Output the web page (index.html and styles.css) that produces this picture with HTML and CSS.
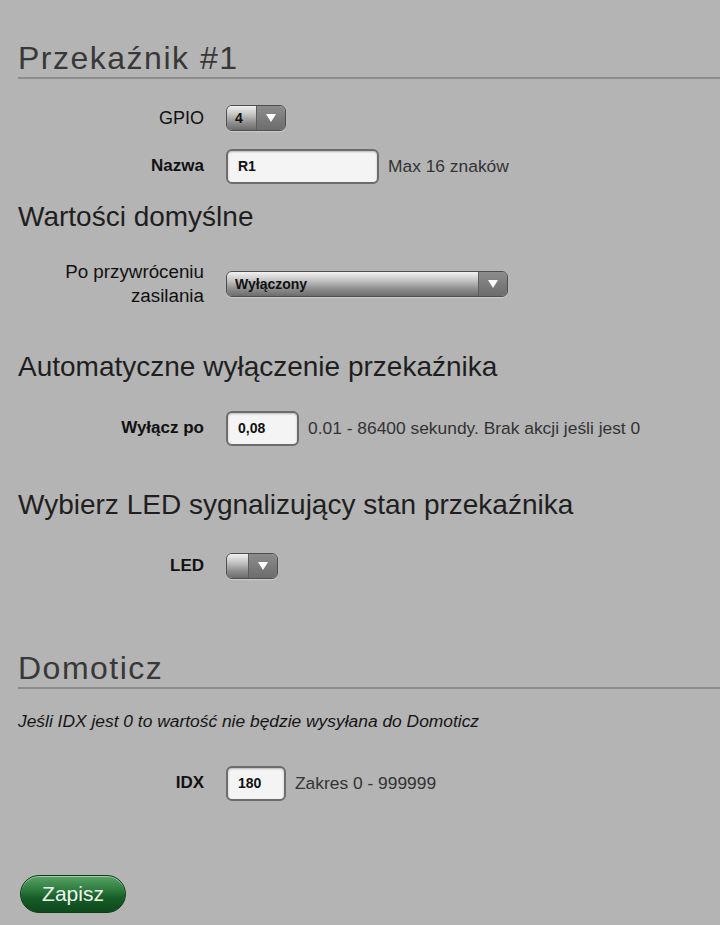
FILE: index.html
```html
<!DOCTYPE html>
<html lang="pl">
<head>
    <meta charset="UTF-8">
    <meta name="viewport" content="width=device-width, initial-scale=1.0">
    <title>Przekaźnik #1</title>
    <link rel="stylesheet" href="styles.css">
</head>
<body>

    <div class="page">
        <section class="relay">
            <h2 class="section-title">Przekaźnik #1</h2>

            <div class="field">
                <label class="field-label">GPIO</label>
                <div class="select select-gpio">
                    <span class="select-value">4</span>
                    <span class="select-arrow"><svg width="10" height="8" viewBox="0 0 10 8"><polygon points="0,0 10,0 5,8" fill="#fff"/></svg></span>
                </div>
            </div>

            <div class="field">
                <label class="field-label strong" for="name">Nazwa</label>
                <input class="text-input input-name" id="name" type="text" value="R1">
                <span class="hint">Max 16 znaków</span>
            </div>

            <div class="block">
                <h3 class="subsection">Wartości domyślne</h3>
                <div class="field">
                    <label class="field-label wide-text">Po przywróceniu<br>zasilania</label>
                    <div class="select select-wide">
                        <span class="select-value">Wyłączony</span>
                        <span class="select-arrow"><svg width="10" height="8" viewBox="0 0 10 8"><polygon points="0,0 10,0 5,8" fill="#fff"/></svg></span>
                    </div>
                </div>
            </div>

            <div class="block">
                <h3 class="subsection">Automatyczne wyłączenie przekaźnika</h3>
                <div class="field">
                    <label class="field-label strong" for="delay">Wyłącz po</label>
                    <input class="text-input input-delay" id="delay" type="text" value="0,08">
                    <span class="hint">0.01 - 86400 sekundy. Brak akcji jeśli jest 0</span>
                </div>
            </div>

            <div class="block">
                <h3 class="subsection">Wybierz LED sygnalizujący stan przekaźnika</h3>
                <div class="field">
                    <label class="field-label strong">LED</label>
                    <div class="select select-led">
                        <span class="select-value"></span>
                        <span class="select-arrow"><svg width="10" height="8" viewBox="0 0 10 8"><polygon points="0,0 10,0 5,8" fill="#fff"/></svg></span>
                    </div>
                </div>
            </div>
        </section>

        <section class="domoticz">
            <h2 class="section-title">Domoticz</h2>
            <p class="note">Jeśli IDX jest 0 to wartość nie będzie wysyłana do Domoticz</p>

            <div class="field">
                <label class="field-label strong" for="idx">IDX</label>
                <input class="text-input input-idx" id="idx" type="text" value="180">
                <span class="hint">Zakres 0 - 999999</span>
            </div>
        </section>

        <button class="save-button" type="button">Zapisz</button>
    </div>

</body>
</html>
```

FILE: styles.css
```css
body {
    font-family: "Liberation Sans", Arial, sans-serif;
    background-color: #b4b4b4;
    color: #111;
    margin: 0;
    padding: 0;
}

.page {
    padding: 0 0 20px 18px;
}

.section-title {
    margin: 39px 0 21px;
    font-size: 32px;
    line-height: 38px;
    font-weight: normal;
    letter-spacing: 1.5px;
    color: #383838;
    border-bottom: 2px solid #8c8c8c;
}

.domoticz {
    margin-top: 65px;
}

.block + .block {
    margin-top: 42px;
}

.subsection {
    margin: 16px 0 26px;
    font-size: 28px;
    line-height: 34px;
    font-weight: normal;
    color: #1f1f1f;
}

.field {
    display: flex;
    align-items: center;
    min-height: 36px;
    margin: 12px 0;
}

.field-label {
    width: 186px;
    flex-shrink: 0;
    margin-right: 22px;
    text-align: right;
    font-size: 18px;
    line-height: 24px;
    color: #111;
}

.field-label.wide-text {
    font-size: 18.8px;
}

.field-label.strong {
    font-weight: bold;
    font-size: 17px;
}

.hint {
    margin-left: 9px;
    font-size: 17.4px;
    color: #333;
}

.note {
    margin: 22px 0 34px;
    font-size: 17.4px;
    line-height: 20px;
    font-style: italic;
    color: #151515;
}

/* selects drawn as in the old iOS-like theme */
.select {
    display: inline-flex;
    box-sizing: border-box;
    height: 26px;
    border: 1px solid #4e4e4e;
    border-radius: 6px;
    overflow: hidden;
    box-shadow: 0 1px 1px rgba(255, 255, 255, 0.35);
}

.select-value {
    flex: 1;
    display: flex;
    align-items: center;
    padding-left: 8px;
    font-size: 14px;
    font-weight: bold;
    color: #111;
    background: linear-gradient(#f2f2f2 0%, #c4c4c4 35%, #8e8e8e 70%, #6c6c6c 100%);
}

.select-arrow {
    width: 28px;
    flex-shrink: 0;
    display: flex;
    align-items: center;
    justify-content: center;
    border-left: 1px solid #5c5c5c;
    background: linear-gradient(#8c8c8c, #6c6c6c);
}

.select-gpio {
    width: 60px;
}

.select-wide {
    width: 282px;
}

.select-led {
    width: 52px;
}

.text-input {
    box-sizing: border-box;
    height: 35px;
    padding: 0 10px;
    border: 2px solid #6c6c6c;
    border-radius: 6px;
    background-color: #f4f4f4;
    box-shadow: inset 0 1px 2px rgba(0, 0, 0, 0.25);
    font-family: "Liberation Sans", Arial, sans-serif;
    font-size: 14px;
    font-weight: bold;
    color: #111;
}

.input-name {
    width: 153px;
}

.input-delay {
    width: 73px;
}

.input-idx {
    width: 60px;
}

.save-button {
    display: block;
    width: 106px;
    height: 38px;
    margin: 74px 0 0 2px;
    border: 1px solid #0c3d18;
    border-radius: 19px;
    background: linear-gradient(#5aa366 0%, #2c7a3c 40%, #175e28 60%, #0e481c 100%);
    box-shadow: inset 0 1px 0 rgba(255, 255, 255, 0.45);
    font-family: "Liberation Sans", Arial, sans-serif;
    font-size: 21px;
    color: #eef4ee;
    cursor: pointer;
}
```
